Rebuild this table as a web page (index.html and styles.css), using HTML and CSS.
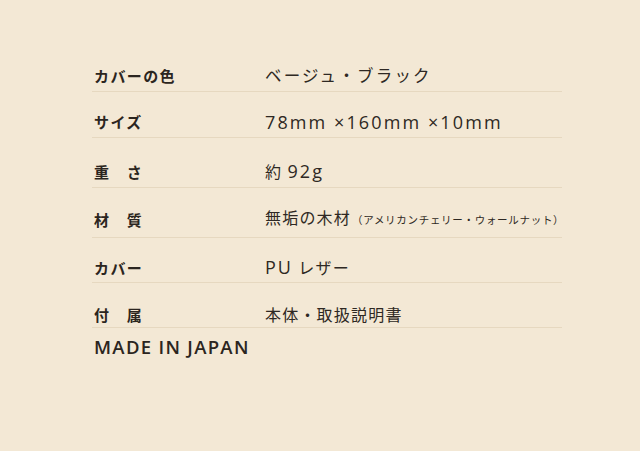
FILE: index.html
```html
<!DOCTYPE html>
<html lang="ja">
<head>
<meta charset="utf-8">
<link rel="stylesheet" href="styles.css">
</head>
<body>
<div class="spec">
  <div class="row r1"><div class="label">カバーの色</div><div class="value v-wide">ベージュ・ブラック</div></div>
  <div class="row r2"><div class="label">サイズ</div><div class="value v-size">78mm ×160mm ×10mm</div></div>
  <div class="row r3"><div class="label">重　さ</div><div class="value">約 <span class="lat">92g</span></div></div>
  <div class="row r4"><div class="label">材　質</div><div class="value">無垢の木材<span class="note">（アメリカンチェリー・ウォールナット）</span></div></div>
  <div class="row r5"><div class="label">カバー</div><div class="value"><span class="lat">PU</span> レザー</div></div>
  <div class="row r6"><div class="label">付　属</div><div class="value">本体・取扱説明書</div></div>
  <div class="made">MADE IN JAPAN</div>
</div>
</body>
</html>
```
FILE: styles.css
```css
html, body {
  margin: 0;
  padding: 0;
  background: #f3e8d5;
}
body {
  width: 640px;
  height: 451px;
  overflow: hidden;
  font-family: "Noto Sans CJK JP", "Noto Sans", sans-serif;
  color: #2b2520;
}
.spec {
  margin-left: 92px;
  width: 470px;
  padding-top: 62px;
}
.row {
  display: flex;
  align-items: flex-end;
  border-bottom: 1px solid #e6d8c0;
  padding-bottom: 4px;
  box-sizing: border-box;
  white-space: nowrap;
}
.r1 { height: 30px; }
.r2 { height: 46px; }
.r3 { height: 50px; }
.r4 { height: 50px; padding-bottom: 6px; }
.r5 { height: 45px; padding-bottom: 3px; }
.r6 { height: 45px; padding-bottom: 1px; }
.label {
  flex: none;
  width: 171px;
  padding-left: 2px;
  font-size: 15px;
  font-weight: 700;
  letter-spacing: 1.4px;
  line-height: 22px;
}
.value {
  font-family: "Open Sans", "Noto Sans CJK JP", sans-serif;
  font-size: 16px;
  font-weight: 400;
  letter-spacing: 1.2px;
  line-height: 22px;
  color: #2e2823;
}
.lat { font-size: 18px; letter-spacing: 2px; }
.v-wide { letter-spacing: 2.2px; font-size: 16.5px; }
.v-size { font-size: 18px; letter-spacing: 2.1px; }
.note {
  font-size: 10.5px;
  letter-spacing: 0.7px;
  margin-left: 1px;
}
.made {
  font-family: "Open Sans", sans-serif;
  padding-left: 2px;
  margin-top: 8px;
  font-size: 18.5px;
  font-weight: 600;
  letter-spacing: 1.3px;
  line-height: 22px;
}
```
